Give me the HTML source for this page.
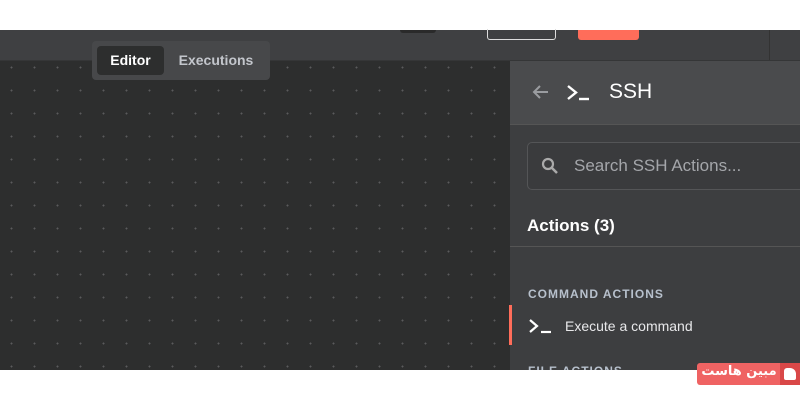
<!DOCTYPE html>
<html><head><style>
body{margin:0;width:800px;height:400px;overflow:hidden;background:#fff;font-family:"Liberation Sans",sans-serif;position:relative}
.a{position:absolute}
</style></head><body>
<div class="a" style="left:0;top:30px;width:800px;height:30px;background:#3f4042;border-bottom:1px solid #353637"></div>
<div class="a" style="left:400px;top:30px;width:36px;height:3px;background:#2a2a2a;border-radius:0 0 3px 3px"></div>
<div class="a" style="left:487px;top:29px;width:67px;height:10px;border:1px solid #ddd;border-top:none;border-radius:0 0 3px 3px"></div>
<div class="a" style="left:578px;top:30px;width:61px;height:10px;background:#ff6d5a;border-radius:0 0 3px 3px"></div>
<div class="a" style="left:769px;top:30px;width:1px;height:30px;background:#333"></div>
<div class="a" style="left:0;top:61px;width:510px;height:309px;background-color:#2d2e2e;background-image:radial-gradient(circle,#5a5b5c 0.8px,transparent 1.1px);background-size:23px 23px;background-position:0px -5px"></div>
<div class="a" style="left:92px;top:41px;width:178px;height:39px;background:#47484a;border-radius:4px"></div>
<div class="a" style="left:97px;top:46px;width:67px;height:29px;background:#2d2e2e;border-radius:4px;color:#fff;font-size:14px;font-weight:bold;line-height:29px;text-align:center">Editor</div>
<div class="a" style="left:170px;top:46px;width:92px;height:29px;color:#c3c6cc;font-size:14px;font-weight:bold;line-height:29px;text-align:center">Executions</div>
<div class="a" style="left:510px;top:61px;width:290px;height:309px;background:#3d3e40"></div>
<div class="a" style="left:510px;top:61px;width:290px;height:63px;background:#4a4b4d;border-bottom:1px solid #555"></div>
<svg class="a" style="left:531px;top:84px" width="20" height="16"><path d="M17 8H3M9 2L3 8l6 6" stroke="#9a9ca0" stroke-width="2" fill="none"/></svg>
<svg class="a" style="left:566px;top:84px" width="26" height="18"><path d="M2 2l8 6.5L2 15" stroke="#fff" stroke-width="2.4" fill="none"/><path d="M13 15h10" stroke="#fff" stroke-width="2.4"/></svg>
<div class="a" style="left:609px;top:80px;color:#fff;font-size:21px">SSH</div>
<div class="a" style="left:527px;top:142px;width:290px;height:46px;border:1px solid #545557;border-radius:5px;background:#3a3b3d"></div>
<svg class="a" style="left:541px;top:157px" width="18" height="18"><circle cx="7" cy="7" r="5" stroke="#aaa" stroke-width="2.2" fill="none"/><path d="M11 11l5 5" stroke="#aaa" stroke-width="2.5"/></svg>
<div class="a" style="left:574px;top:156px;color:#a4a6aa;font-size:17px">Search SSH Actions...</div>
<div class="a" style="left:527px;top:216px;color:#fff;font-size:17px;font-weight:bold">Actions (3)</div>
<div class="a" style="left:510px;top:246px;width:290px;height:1px;background:#555"></div>
<div class="a" style="left:528px;top:287px;color:#b7c0cc;font-size:12px;font-weight:bold;letter-spacing:1px">COMMAND ACTIONS</div>
<div class="a" style="left:509px;top:305px;width:3px;height:40px;background:#ff6d5a"></div>
<svg class="a" style="left:528px;top:318px" width="26" height="16"><path d="M2 2l7 6L2 14" stroke="#fff" stroke-width="2.2" fill="none"/><path d="M13 14h10" stroke="#fff" stroke-width="2.2"/></svg>
<div class="a" style="left:565px;top:318px;color:#e8e8ea;font-size:14px">Execute a command</div>
<div class="a" style="left:528px;top:364px;color:#b7c0cc;font-size:12px;font-weight:bold;letter-spacing:1px">FILE ACTIONS</div>
<div class="a" style="left:0;top:370px;width:800px;height:30px;background:#fff"></div>
<div class="a" style="left:697px;top:363px;width:103px;height:22px;background:#ef6363;border-radius:3px"></div>
<div class="a" style="left:780px;top:363px;width:20px;height:22px;background:#d94848"></div>
<div class="a" style="left:784px;top:368px;width:12px;height:12px;background:#fff;border-radius:3px 6px 2px 2px"></div>
<div class="a" style="left:700px;top:364px;width:78px;color:#fff;font-size:13px;font-weight:bold;text-align:center;font-family:'DejaVu Sans',sans-serif">مبین هاست</div>
</body></html>
